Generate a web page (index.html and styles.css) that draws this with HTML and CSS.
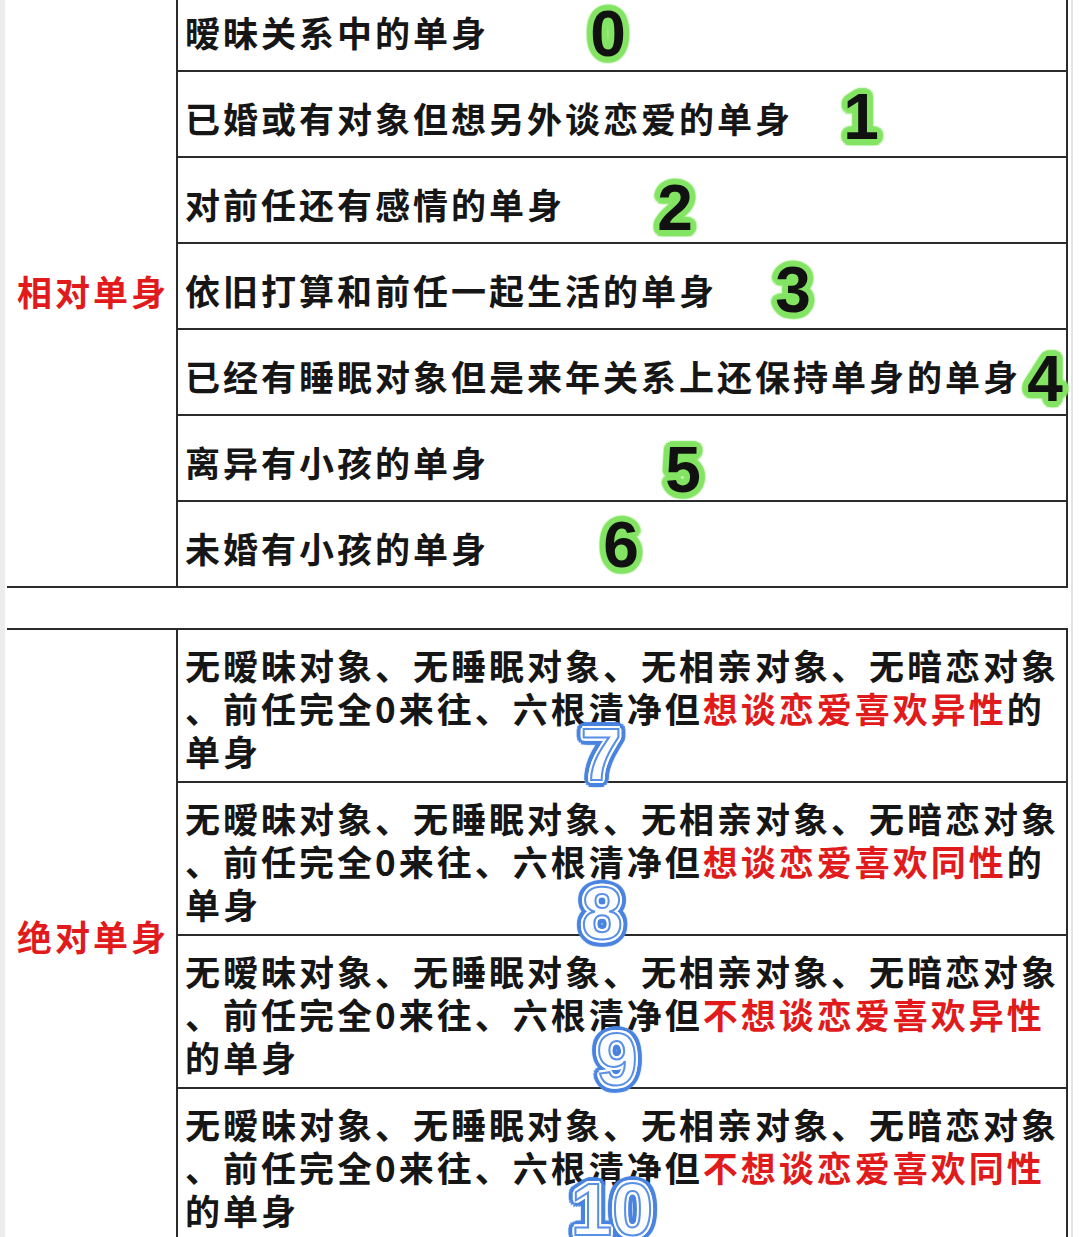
FILE: index.html
```html
<!DOCTYPE html>
<html lang="zh-CN">
<head>
<meta charset="utf-8">
<title>单身分类</title>
<link rel="stylesheet" href="styles.css">
</head>
<body>
<div class="page">
  <section class="group g1">
    <div class="label">相对单身</div>
    <div class="rows">
      <div class="row"><span class="txt">暧昧关系中的单身</span></div>
      <div class="row"><span class="txt">已婚或有对象但想另外谈恋爱的单身</span></div>
      <div class="row"><span class="txt">对前任还有感情的单身</span></div>
      <div class="row"><span class="txt">依旧打算和前任一起生活的单身</span></div>
      <div class="row"><span class="txt">已经有睡眠对象但是来年关系上还保持单身的单身</span></div>
      <div class="row"><span class="txt">离异有小孩的单身</span></div>
      <div class="row"><span class="txt">未婚有小孩的单身</span></div>
    </div>
  </section>

  <section class="group g2">
    <div class="label">绝对单身</div>
    <div class="rows">
      <div class="row">
        <div class="txt">无暧昧对象、无睡眠对象、无相亲对象、无暗恋对象</div>
        <div class="txt">、前任完全0来往、六根清净但<span class="hl">想谈恋爱喜欢异性</span>的</div>
        <div class="txt">单身</div>
      </div>
      <div class="row">
        <div class="txt">无暧昧对象、无睡眠对象、无相亲对象、无暗恋对象</div>
        <div class="txt">、前任完全0来往、六根清净但<span class="hl">想谈恋爱喜欢同性</span>的</div>
        <div class="txt">单身</div>
      </div>
      <div class="row">
        <div class="txt">无暧昧对象、无睡眠对象、无相亲对象、无暗恋对象</div>
        <div class="txt">、前任完全0来往、六根清净但<span class="hl">不想谈恋爱喜欢异性</span></div>
        <div class="txt">的单身</div>
      </div>
      <div class="row">
        <div class="txt">无暧昧对象、无睡眠对象、无相亲对象、无暗恋对象</div>
        <div class="txt">、前任完全0来往、六根清净但<span class="hl">不想谈恋爱喜欢同性</span></div>
        <div class="txt">的单身</div>
      </div>
    </div>
  </section>

  <span class="badge green b0">0</span>
  <span class="badge green b1">1</span>
  <span class="badge green b2">2</span>
  <span class="badge green b3">3</span>
  <span class="badge green b4">4</span>
  <span class="badge green b5">5</span>
  <span class="badge green b6">6</span>
  <span class="badge blue b7">7</span>
  <span class="badge blue b8">8</span>
  <span class="badge blue b9">9</span>
  <span class="badge blue b10">10</span>
</div>
</body>
</html>
```

FILE: styles.css
```css
html, body {
  margin: 0;
  padding: 0;
  background: #ffffff;
}

body {
  font-family: "Noto Sans CJK SC", "Noto Sans", sans-serif;
}

.page {
  position: relative;
  width: 1080px;
  height: 1237px;
  overflow: hidden;
  box-sizing: border-box;
  padding-left: 7px;
  background:
    linear-gradient(to right, #ececec 0, #ececec 5px, transparent 5px, transparent 1071px, #e4e4e4 1071px, #e4e4e4 1073px, transparent 1073px),
    #ffffff;
}

.group {
  display: grid;
  grid-template-columns: 171px 890px;
  width: 1061px;
  background: #ffffff;
}

.g1 {
  margin-top: -14px;
  border-bottom: 2px solid #2b2b2b;
}

.g2 {
  margin-top: 40px;
  border-top: 2px solid #2b2b2b;
}

.label {
  border-right: 2px solid #2b2b2b;
  display: flex;
  align-items: center;
  justify-content: center;
  padding-left: 3px;
  color: #e11b1b;
  font-weight: 700;
  font-size: 35px;
  letter-spacing: 3px;
}

.g1 .label {
  padding-top: 8px;
}

.rows {
  border-right: 2px solid #2b2b2b;
}

.row {
  border-top: 2px solid #2b2b2b;
  padding-left: 7px;
}

.row:first-child {
  border-top: 0;
}

.g1 .row {
  height: 78px;
  padding-top: 6px;
  display: flex;
  align-items: center;
}

.g2 .row {
  height: 138px;
  padding-top: 13px;
}

.txt {
  font-size: 35px;
  font-weight: 700;
  letter-spacing: 3px;
  line-height: 43px;
  color: #161616;
  white-space: nowrap;
}

.hl {
  color: #e11b1b;
}

.badge {
  position: absolute;
  line-height: 1;
  transform: translate(-50%, -50%);
  font-family: "Liberation Sans", Arial, sans-serif;
  font-weight: 700;
  white-space: nowrap;
}

.green {
  font-size: 64px;
  color: #111111;
  text-shadow:
    6px 0 1.5px #84e464, 5.5px 2.3px 1.5px #84e464, 4.2px 4.2px 1.5px #84e464, 2.3px 5.5px 1.5px #84e464,
    0 6px 1.5px #84e464, -2.3px 5.5px 1.5px #84e464, -4.2px 4.2px 1.5px #84e464, -5.5px 2.3px 1.5px #84e464,
    -6px 0 1.5px #84e464, -5.5px -2.3px 1.5px #84e464, -4.2px -4.2px 1.5px #84e464, -2.3px -5.5px 1.5px #84e464,
    0 -6px 1.5px #84e464, 2.3px -5.5px 1.5px #84e464, 4.2px -4.2px 1.5px #84e464, 5.5px -2.3px 1.5px #84e464,
    3px 0 0 #7de35c, 0 3px 0 #7de35c, -3px 0 0 #7de35c, 0 -3px 0 #7de35c,
    2px 2px 0 #7de35c, -2px 2px 0 #7de35c, 2px -2px 0 #7de35c, -2px -2px 0 #7de35c,
    0 0 5px #b4f29c;
}

.blue {
  font-size: 74px;
  color: #fbfdff;
  -webkit-text-stroke: 2px #5a8fe6;
  text-shadow:
    3px 0 0 #fff, 2.6px 1.5px 0 #fff, 1.5px 2.6px 0 #fff, 0 3px 0 #fff,
    -1.5px 2.6px 0 #fff, -2.6px 1.5px 0 #fff, -3px 0 0 #fff, -2.6px -1.5px 0 #fff,
    -1.5px -2.6px 0 #fff, 0 -3px 0 #fff, 1.5px -2.6px 0 #fff, 2.6px -1.5px 0 #fff,
    7px 0 0.8px #4a84e0, 6.5px 2.7px 0.8px #4a84e0, 5px 5px 0.8px #4a84e0, 2.7px 6.5px 0.8px #4a84e0,
    0 7px 0.8px #4a84e0, -2.7px 6.5px 0.8px #4a84e0, -5px 5px 0.8px #4a84e0, -6.5px 2.7px 0.8px #4a84e0,
    -7px 0 0.8px #4a84e0, -6.5px -2.7px 0.8px #4a84e0, -5px -5px 0.8px #4a84e0, -2.7px -6.5px 0.8px #4a84e0,
    0 -7px 0.8px #4a84e0, 2.7px -6.5px 0.8px #4a84e0, 5px -5px 0.8px #4a84e0, 6.5px -2.7px 0.8px #4a84e0,
    5px 0 0 #4a84e0, 3.5px 3.5px 0 #4a84e0, 0 5px 0 #4a84e0, -3.5px 3.5px 0 #4a84e0,
    -5px 0 0 #4a84e0, -3.5px -3.5px 0 #4a84e0, 0 -5px 0 #4a84e0, 3.5px -3.5px 0 #4a84e0;
}

.b0 { left: 608px; top: 34px; }
.b1 { left: 861px; top: 117px; }
.b2 { left: 675px; top: 208px; }
.b3 { left: 793px; top: 290px; }
.b4 { left: 1045px; top: 379px; }
.b5 { left: 683px; top: 470px; }
.b6 { left: 621px; top: 545px; }
.b7 { left: 601px; top: 755px; }
.b8 { left: 602px; top: 914px; }
.b9 { left: 617px; top: 1060px; }
.b10 { left: 612px; top: 1210px; }
```
